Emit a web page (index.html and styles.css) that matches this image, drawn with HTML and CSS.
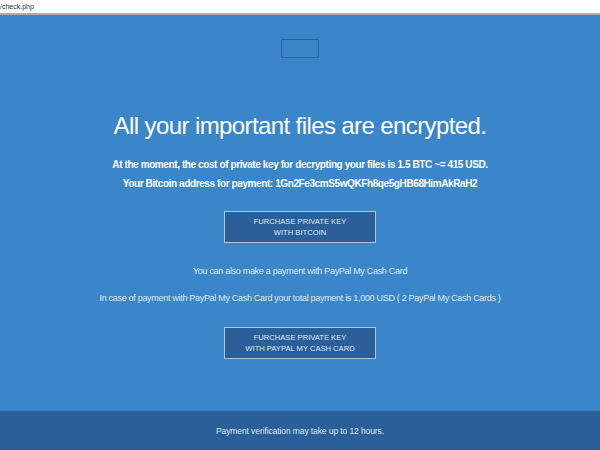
FILE: index.html
```html
<!DOCTYPE html>
<html>
<head>
<meta charset="utf-8">
<link rel="stylesheet" href="styles.css">
</head>
<body>
<div class="addr"><span class="url">/check.php</span></div>
<main class="main">
  <div class="logo"></div>
  <h1 class="title">All your important files are encrypted.</h1>
  <p class="info">At the moment, the cost of private key for decrypting your files is 1.5 BTC ~= 415 USD.</p>
  <p class="info info2">Your Bitcoin address for payment: 1Gn2Fe3cmS5wQKFh8qe5gHB68HimAkRaH2</p>
  <div class="btn btn1">FURCHASE PRIVATE KEY<br>WITH BITCOIN</div>
  <p class="note n1">You can also make a payment with PayPal My Cash Card</p>
  <p class="note n2">In case of payment with PayPal My Cash Card your total payment is 1,000 USD ( 2 PayPal My Cash Cards )</p>
  <div class="btn btn2">FURCHASE PRIVATE KEY<br>WITH PAYPAL MY CASH CARD</div>
</main>
<footer class="foot">Payment verification may take up to 12 hours.</footer>
</body>
</html>
```
FILE: styles.css
```css
html, body { margin: 0; padding: 0; }
body {
  width: 600px;
  height: 450px;
  overflow: hidden;
  font-family: "Liberation Sans", Arial, sans-serif;
  background: #3a86c8;
  display: flex;
  flex-direction: column;
}
.addr {
  height: 13px;
  background: #fdfdfd;
  border-bottom: 2px solid #a8adb2;
  display: flex;
  align-items: center;
}
.url {
  font-size: 7px;
  color: #333;
}
.main {
  flex: 1;
  background: #3a86c8;
  display: flex;
  flex-direction: column;
  align-items: center;
  color: #fff;
}
.logo {
  width: 36px;
  height: 17px;
  border: 1px solid #2a62a0;
  margin-top: 24px;
}
.title {
  font-size: 24px;
  font-weight: normal;
  margin: 53px 0 0;
  line-height: 30px;
  letter-spacing: -0.6px;
}
.info {
  margin: 17px 0 0;
  font-size: 10px;
  font-weight: bold;
  line-height: 13px;
  letter-spacing: -0.4px;
}
.info2 { margin-top: 6px; }
.btn {
  width: 150px;
  height: 30px;
  border: 1px solid #a9c6e4;
  background: #2c5f98;
  font-size: 7.6px;
  line-height: 11px;
  text-align: center;
  display: flex;
  align-items: center;
  justify-content: center;
  color: #dfe9f4;
}
.btn1 { margin-top: 21px; }
.note {
  font-size: 9px;
  color: #dce8f4;
  margin: 0;
  line-height: 10px;
  letter-spacing: -0.3px;
}
.n1 { margin-top: 23px; }
.n2 { margin-top: 17px; }
.btn2 { margin-top: 24px; }
.foot {
  height: 39px;
  background: #2a5f9a;
  border-top: 1px solid #3f7ab8;
  color: #dce6f2;
  font-size: 8.5px;
  display: flex;
  align-items: center;
  justify-content: center;
  letter-spacing: -0.1px;
}
```
